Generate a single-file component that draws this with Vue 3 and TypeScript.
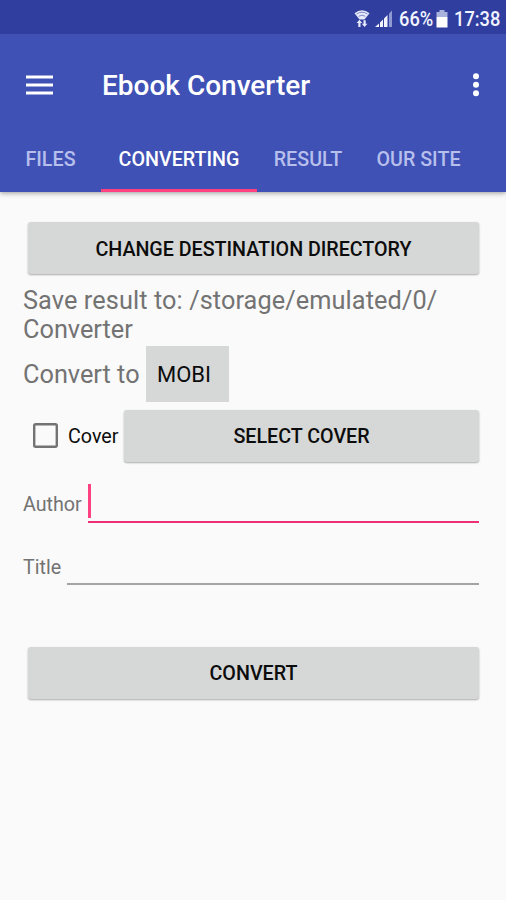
<script setup lang="ts">
import { ref } from 'vue'

interface Tab {
  id: string
  label: string
}

const tabs: Tab[] = [
  { id: 'files', label: 'FILES' },
  { id: 'converting', label: 'CONVERTING' },
  { id: 'result', label: 'RESULT' },
  { id: 'site', label: 'OUR SITE' },
]
const activeTab = ref('converting')
const directory = '/storage/emulated/0/Converter'.split(/(?<=\/)(?=Converter)/)
const format = ref('MOBI')
const hasCover = ref(false)
</script>

<template>
  <div class="screen">
    <header class="top">
      <div class="status">
        <svg class="wifi" width="16" height="19" viewBox="0 0 16 19">
          <path d="M.5 4.2Q8-1.8 15.5 4.2L10.5 10.5H5.5Z" fill="#e6e9fa" />
          <path d="M2.6 5Q8 1.4 13.4 5M4.6 7.3Q8 5 11.4 7.3" fill="none" stroke="#6470bb" stroke-width=".8" />
          <path d="M5.4 10.8 8.2 14H2.6ZM10.6 18 7.8 14.8H13.4ZM4.3 13.5H6.5V18H4.3ZM9.5 11.2H11.7V15H9.5Z" fill="#e6e9fa" />
        </svg>
        <svg class="signal" width="18" height="17" viewBox="0 0 18 17">
          <path d="M0 17 4 13.5V17ZM5 12.5 8 9.5V17H5ZM9 8.5 12.5 5V17H9Z" fill="#f2f4ff" />
          <path d="M14 3.5 17 .5V17H14Z" fill="#8f99d3" />
        </svg>
        <span class="percent">66%</span>
        <svg class="battery" width="12" height="18" viewBox="0 0 12 18">
          <path d="M3.5 0H8.5V2H11.5V7H.5V2H3.5Z" fill="#a9b1dd" />
          <path d="M.5 7H11.5V17.5H.5Z" fill="#fff" />
        </svg>
        <span class="clock">17:38</span>
      </div>
      <div class="bar">
        <svg class="menu" width="27" height="20" viewBox="0 0 27 20">
          <path d="M0 2H27M0 10H27M0 18H27" stroke="#fff" stroke-width="2.8" />
        </svg>
        <h1>Ebook Converter</h1>
        <svg class="more" width="8" height="24" viewBox="0 0 8 24">
          <circle cx="4" cy="3.3" r="3" fill="#fff" />
          <circle cx="4" cy="11.8" r="3" fill="#fff" />
          <circle cx="4" cy="20.2" r="3" fill="#fff" />
        </svg>
      </div>
      <nav class="tabs">
        <button
          v-for="tab in tabs"
          :key="tab.id"
          class="tab"
          :class="[tab.id, { active: tab.id === activeTab }]"
          @click="activeTab = tab.id"
        >
          {{ tab.label }}
        </button>
      </nav>
    </header>

    <main>
      <button class="raised change">CHANGE DESTINATION DIRECTORY</button>
      <p class="path"><span class="first">Save result to: {{ directory[0] }}</span><br />{{ directory[1] }}</p>
      <div class="format-row">
        <span class="large">Convert to</span>
        <button class="format">{{ format }}</button>
      </div>
      <div class="cover-row">
        <label class="check" @click="hasCover = !hasCover">
          <svg width="25" height="25" viewBox="0 0 25 25">
            <rect x="1.2" y="1.2" width="22.6" height="22.6" rx="1.5" fill="none" stroke="#737373" stroke-width="2.4" />
            <path v-if="hasCover" d="M6 13 11 18 20 8" fill="none" stroke="#ff4081" stroke-width="3" />
          </svg>
          <span>Cover</span>
        </label>
        <button class="raised">SELECT COVER</button>
      </div>
      <div class="field author">
        <span>Author</span>
        <div class="input"><i class="caret"></i></div>
      </div>
      <div class="field title">
        <span>Title</span>
        <div class="input"></div>
      </div>
      <button class="raised convert">CONVERT</button>
    </main>
  </div>
</template>

<style>
body {
  margin: 0;
}
</style>

<style scoped>
.screen {
  width: 506px;
  height: 900px;
  overflow: hidden;
  background: #fafafa;
  font-family: Roboto, sans-serif;
  color: #0c0c0c;
}
button {
  appearance: none;
  border: 0;
  margin: 0;
  padding: 0;
  font: inherit;
  color: inherit;
}
span,
h1,
button {
  white-space: nowrap;
}
.top {
  position: relative;
  height: 191.5px;
  background: #3f51b5;
  box-shadow: 0 1px 5px rgba(0, 0, 0, 0.4);
}
.status {
  box-sizing: border-box;
  height: 34px;
  display: flex;
  align-items: center;
  justify-content: flex-end;
  padding: 3px 6px 0 0;
  background: #303f9f;
  color: #f2f4ff;
  font-size: 21px;
  font-weight: 500;
}
.wifi {
  margin-right: 5px;
}
.signal {
  margin-right: 6px;
}
.percent,
.clock {
  transform: scaleX(0.87);
  transform-origin: left;
}
.percent {
  width: 34px;
}
.clock {
  width: 46px;
}
.battery {
  margin: 0 6px 0 3px;
}
.bar {
  height: 92px;
  display: flex;
  align-items: center;
  padding: 10px 26px 0 26px;
  box-sizing: border-box;
}
.menu {
  margin-top: -1px;
}
.bar h1 {
  margin: 2px auto 0 49px;
  color: #fff;
  font-size: 28px;
  font-weight: 500;
  line-height: 32px;
}
.tabs {
  display: flex;
  height: 65.5px;
}
.tab {
  box-sizing: border-box;
  background: none;
  padding-top: 5px;
  border-bottom: 3px solid transparent;
  color: #b7bfec;
  font-size: 19.7px;
  font-weight: 500;
  text-align: center;
}
.files {
  width: 101px;
}
.converting {
  width: 156px;
}
.result {
  width: 102px;
}
.site {
  width: 119px;
}
.active {
  color: #fff;
  border-bottom-color: #ff4081;
}
main {
  padding: 30.5px 27px 0 23px;
}
.raised {
  display: block;
  width: calc(100% - 5px);
  height: 52px;
  margin-left: 5px;
  border-radius: 3px;
  background: #d6d7d7;
  box-shadow: 0 1px 2px rgba(0, 0, 0, 0.32);
  font-size: 19.7px;
  font-weight: 500;
}
.change {
  padding-top: 2px;
  letter-spacing: -0.02px;
}
.path,
.large {
  color: #737373;
  font-size: 25.3px;
  line-height: 29.5px;
}
.path {
  margin: 11.6px 0 0;
}
.first {
  letter-spacing: 0.09px;
}
.format-row {
  display: flex;
  align-items: center;
  height: 56px;
  margin-top: 1px;
  gap: 7px;
}
.large {
  width: 116px;
  padding-top: 3px;
}
.format {
  width: 83px;
  height: 56px;
  padding: 1px 0 0 11px;
  text-align: left;
  background: #d6d7d7;
  font-size: 22px;
}
.cover-row {
  display: flex;
  margin-top: 8.9px;
}
.check {
  flex: none;
  width: 101px;
  box-sizing: border-box;
  padding-left: 10px;
  display: flex;
  align-items: center;
  gap: 10px;
  font-size: 19.7px;
}
.check svg {
  margin-top: -1px;
}
.cover-row .raised {
  flex: 1;
  margin-left: 0;
}
.field {
  display: flex;
  align-items: flex-end;
  color: #737373;
  font-size: 19.7px;
  gap: 6px;
}
.field span {
  line-height: 24px;
}
.author {
  height: 60.5px;
}
.author span {
  width: 58.5px;
  margin-bottom: 6px;
}
.title {
  height: 62.5px;
}
.title span {
  width: 38px;
  margin-bottom: 5px;
}
.input {
  flex: 1;
  height: 39px;
  box-sizing: border-box;
}
.author .input {
  border-bottom: 2.5px solid #ec2f77;
}
.title .input {
  border-bottom: 2px solid #a4a4a4;
}
.caret {
  display: block;
  width: 3px;
  height: 34px;
  background: #ff4081;
}
.convert {
  margin-top: 62px;
  padding-top: 1px;
}
</style>
